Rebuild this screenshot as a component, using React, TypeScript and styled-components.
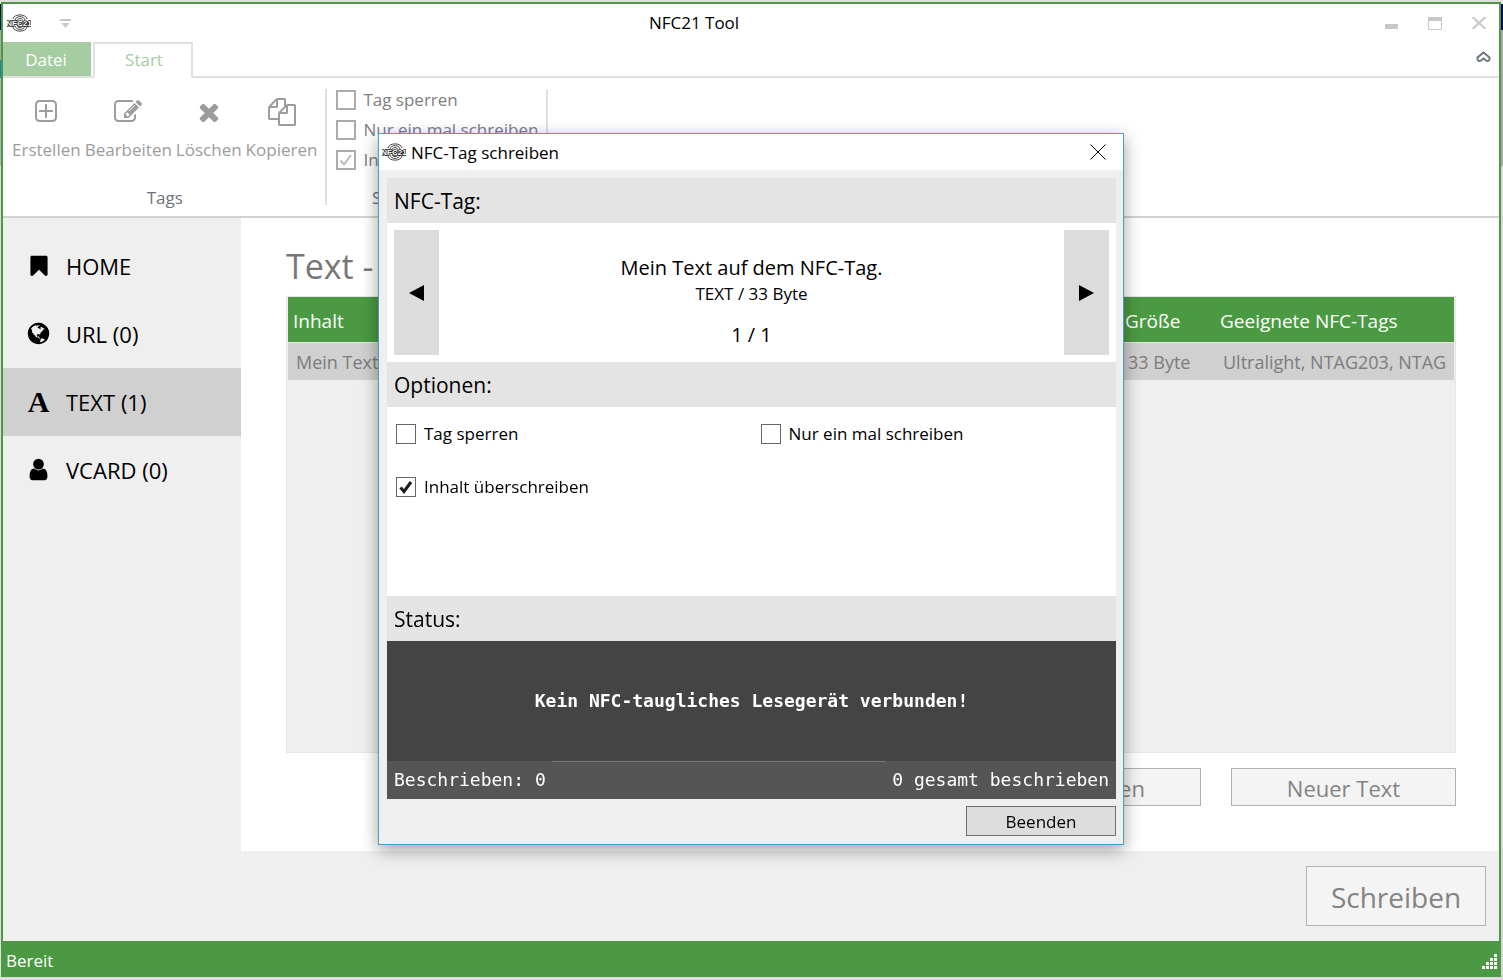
import React from "react";
import styled, { createGlobalStyle, css } from "styled-components";

const GREEN = "#4b9a43";
const UI = `"Open Sans", "Noto Sans", sans-serif`;

const GlobalStyle = createGlobalStyle`
  *, *::before, *::after { box-sizing: border-box; }
  html, body { margin: 0; background: #dcdcdc; }
  body { font-family: ${UI}; font-size: 17px; line-height: 24px; color: #000; }
  button, input, table { font: inherit; }
  button { padding: 0; cursor: default; }
`;

/* ---------- icons ---------- */

const paths = {
  create:
    "M1344 800v64q0 14-9 23t-23 9h-352v352q0 14-9 23t-23 9h-64q-14 0-23-9t-9-23v-352h-352q-14 0-23-9t-9-23v-64q0-14 9-23t23-9h352v-352q0-14 9-23t23-9h64q14 0 23 9t9 23v352h352q14 0 23 9t9 23zm128 448v-832q0-66-47-113t-113-47h-832q-66 0-113 47t-47 113v832q0 66 47 113t113 47h832q66 0 113-47t47-113zm128-832v832q0 119-84.5 203.5t-203.5 84.5h-832q-119 0-203.5-84.5t-84.5-203.5v-832q0-119 84.5-203.5t203.5-84.5h832q119 0 203.5 84.5t84.5 203.5z",
  edit:
    "M888 1184l116-116-152-152-116 116v56h96v96h56zm440-720q-16-16-33 1l-350 350q-17 17-1 33t33-1l350-350q17-17 1-33zm80 594v190q0 119-84.5 203.5t-203.5 84.5h-832q-119 0-203.5-84.5t-84.5-203.5v-832q0-119 84.5-203.5t203.5-84.5h832q63 0 117 25 15 7 18 23 3 17-9 29l-49 49q-14 14-32 8-23-6-45-6h-832q-66 0-113 47t-47 113v832q0 66 47 113t113 47h832q66 0 113-47t47-113v-126q0-13 9-22l64-64q15-15 35-7t20 29zm-96-738l288 288-672 672h-288v-288zm444 132l-92 92-288-288 92-92q28-28 68-28t68 28l152 152q28 28 28 68t-28 68z",
  remove:
    "M1490 1322q0 40-28 68l-136 136q-28 28-68 28t-68-28l-294-294-294 294q-28 28-68 28t-68-28l-136-136q-28-28-28-68t28-68l294-294-294-294q-28-28-28-68t28-68l136-136q28-28 68-28t68 28l294 294 294-294q28-28 68-28t68 28l136 136q28 28 28 68t-28 68l-294 294 294 294q28 28 28 68z",
  copy:
    "M1696 384q40 0 68 28t28 68v1216q0 40-28 68t-68 28h-960q-40 0-68-28t-28-68v-288h-544q-40 0-68-28t-28-68v-672q0-40 20-88t48-76l408-408q28-28 76-48t88-20h416q40 0 68 28t28 68v328q68-40 128-40h416zm-544 213l-299 299h299v-299zm-640-384l-299 299h299v-299zm196 647l316-316v-416h-384v416q0 40-28 68t-68 28h-416v640h512v-256q0-40 20-88t48-76zm956 804v-1152h-384v416q0 40-28 68t-68 28h-416v640h896z",
  bookmark:
    "M1420 128q23 0 44 9 33 13 52.5 41t19.5 62v1289q0 34-19.5 62t-52.5 41q-19 8-44 8-48 0-83-32l-441-424-441 424q-36 33-83 33-23 0-44-9-33-13-52.5-41t-19.5-62v-1289q0-34 19.5-62t52.5-41q21-9 44-9h1048z",
  user:
    "M1536 1399q0 109-62.5 187t-150.5 78h-854q-88 0-150.5-78t-62.5-187q0-85 8.5-160.5t31.5-152 58.5-131 94-89 134.5-34.5q131 128 313 128t313-128q76 0 134.5 34.5t94 89 58.5 131 31.5 152 8.5 160.5zm-256-887q0 159-112.5 271.5t-271.5 112.5-271.5-112.5-112.5-271.5 112.5-271.5 271.5-112.5 271.5 112.5 112.5 271.5z",
  globe:
    "M896 128q209 0 385.5 103t279.5 279.5 103 385.5-103 385.5-279.5 279.5-385.5 103-385.5-103-279.5-279.5-103-385.5 103-385.5 279.5-279.5 385.5-103zm274 521q-2 1-9.5 9.5t-13.5 9.5q2 0 4.5-5t5-11 3.5-7q6-7 22-15 14-6 52-12 34-8 51 11-2-2 9.5-13t14.5-12q3-2 15-4.5t15-7.5l2-22q-12 1-17.5-7t-6.5-21q0 2-6 8 0-7-4.5-8t-11.5 1-9 1q-10-3-15-7.5t-8-16.5-4-15q-2-5-9.5-11t-9.5-10q-1-2-2.5-5.5t-3-6.5-4-5.5-5.5-2.5-7 5-7.5 10-4.5 5q-3-2-6-1.5t-4.5 1-4.5 3-5 3.5q-3 2-8.5 3t-8.5 2q15-5-1-11-10-4-16-3 9-4 7.5-12t-8.5-14h5q-1-4-8.5-8.5t-17.5-8.5-13-6q-8-5-34-9.5t-33-.5q-5 6-4.5 10.5t4 14 3.5 12.5q1 6-5.5 13t-6.5 12q0 7 14 15.5t10 21.5q-3 8-16 16t-16 12q-5 8-1.5 18.5t10.5 16.5q2 2 1.5 4t-3.5 4.5-5.5 4-6.5 3.5l-3 2q-11 5-20.5-6t-13.5-26q-7-25-16-30-23-8-29 1-5-13-41-26-25-9-58-4 6-1 0-15-7-15-19-12 3-6 4-17.5t1-13.5q3-13 12-23 1-1 7-8.5t9.5-13.5.5-6q35 4 50-11 5-5 11.5-17t10.5-17q9-6 14-5.5t14.5 5.5 14.5 5q14 1 15.5-11t-7.5-20q12 1 3-17-4-7-8-9-12-4-27 5-8 4 2 8-1-1-9.5 10.5t-16.5 17.5-16-5q-1-1-5.5-13.5t-9.5-13.5q-8 0-16 15 3-8-11-15t-24-8q19-12-8-27-7-4-20.5-5t-19.5 4q-5 7-5.5 11.5t5 8 10.5 5.5 11.5 4 8.5 3q14 10 8 14-2 1-8.5 3.5t-11.5 4.5-6 4q-3 4 0 14t-2 14q-5-5-9-17.5t-7-16.5q7 9-25 6l-10-1q-4 0-16 2t-20.5 1-13.5-8q-4-8 0-20 1-4 4-2-4-3-11-9.5t-10-8.5q-46 15-94 41 6 1 12-1 5-2 13-6.5t10-5.5q34-14 42-7l5-5q14 16 20 25-7-4-30-1-20 6-22 12 7 12 5 18-4-3-11.5-10t-14.5-11-15-5q-16 0-22 1-146 80-235 222 7 7 12 8 4 1 5 9t2.5 11 11.5-3q9 8 3 19 1-1 44 27 19 17 21 21 3 11-10 18-1-2-9-9t-9-4q-3 5 .5 18.5t10.5 12.5q-7 0-9.5 16t-2.5 35.5-1 23.5l2 1q-3 12 5.5 34.5t21.5 19.5q-13 3 20 43 6 8 8 9 3 2 12 7.5t15 10 10 10.5q4 5 10 22.5t14 23.5q-2 6 9.5 20t10.5 23q-1 0-2.5 1t-2.5 1q3 7 15.5 14t15.5 13q1 3 2 10t3 11 8 2q2-20-24-62-15-25-17-29-3-5-5.5-15.5t-4.5-14.5q2 0 6 1.5t8.5 3.5 7.5 4 2 3q-3 7 2 17.5t12 18.5 17 19 12 13q6 6 14 19.5t0 13.5q9 0 20 10t17 20q5 8 8 26t5 24q2 7 8.5 13.5t12.5 9.5l16 8 13 7q5 2 18.5 10.5t21.5 11.5q10 4 16 4t14.5-2.5 13.5-3.5q15-2 29 15t21 21q36 19 55 11-2 1 .5 7.5t8 15.5 9 14.5 5.5 8.5q5 6 18 15t18 15q6-4 7-9-3 8 7 20t18 10q14-3 14-32-31 15-49-18 0-1-2.5-5.5t-4-8.5-2.5-8.5 0-7.5 5-3q9 0 10-3.5t-2-12.5-4-13q-1-8-11-20t-12-15q-5 9-16 8t-16-9q0 1-1.5 5.5t-1.5 6.5q-13 0-15-1 1-3 2.5-17.5t3.5-22.5q1-4 5.5-12t7.5-14.5 4-12.5-4.5-9.5-17.5-2.5q-19 1-26 20-1 3-3 10.5t-5 11.5-9 7q-7 3-24 2t-24-5q-13-8-22.5-29t-9.5-37q0-10 2.5-26.5t3-25-5.5-24.5q3-2 9-9.5t10-10.5q2-1 4.5-1.5t4.5 0 4-1.5 3-6q-1-1-4-3-3-3-4-3 7 3 28.5-1.5t27.5 1.5q15 11 22-2 0-1-2.5-9.5t-.5-13.5q5 27 29 9 3 3 15.5 5t17.5 5q3 2 7 5.5t5.5 4.5 5-.5 8.5-6.5q10 14 12 24 11 40 19 44 7 3 11 2t4.5-9.5 0-14-1.5-12.5l-1-8v-18l-1-8q-15-3-18.5-12t1.5-18.5 15-18.5q1-1 8-3.5t15.5-6.5 12.5-8q21-19 15-35 7 0 11-9-1 0-5-3t-7.5-5-4.5-2q9-5 2-16 5-3 7.5-11t7.5-10q9 12 21 2 7-8 1-16 5-7 20.5-10.5t18.5-9.5q7 2 8-2t1-12 3-12q4-5 15-9t13-5l17-11q3-4 0-4 18 2 31-11 10-11-6-20 3-6-3-9.5t-15-5.5q3-1 11.5-.5t10.5-1.5q15-10-7-16-17-5-43 12zm-163 877q206-36 351-189-3-3-12.5-4.5t-12.5-3.5q-18-7-24-8 1-7-2.5-13t-8-9-12.5-8-11-7q-2-2-7-6t-7-5.5-7.5-4.5-8.5-2-10 1l-3 1q-3 1-5.5 2.5t-5.5 3-4 3 0 2.5q-21-17-36-22-5-1-11-5.5t-10.5-7-10-1.5-11.5 7q-5 5-6 15t-2 13q-7-5 0-17.5t2-18.5q-3-6-10.5-4.5t-12 4.5-11.5 8.5-9 6.5-8.5 5.5-8.5 7.5q-3 4-6 12t-5 11q-2-4-11.5-6.5t-9.5-5.5q2 10 4 35t5 38q7 31-12 48-27 25-29 40-4 22 12 26 0 7-8 20.5t-7 21.5q0 6 2 16z",
};

type IconName = keyof typeof paths;

const Icon = ({ name, size = 28 }: { name: IconName; size?: number }) => (
  <svg width={size} height={size} viewBox="0 0 1792 1792" fill="currentColor" aria-hidden="true">
    <path d={paths[name]} />
  </svg>
);

const LogoText = styled.text`
  font: bold 8px "Liberation Sans", sans-serif;
  fill: #fff;
  stroke: #222;
  stroke-width: 1.6px;
  paint-order: stroke;
`;

const Logo = () => (
  <svg width="24" height="18" viewBox="0 0 24 18" aria-hidden="true">
    <g fill="none" stroke="#444" strokeWidth="1">
      <path d="M6 5C7 -0.5 19 -0.5 20 5M8 6C9 1.500 17 1.500 18 6M10 6.500C11 4 15 4 16 6.500" />
      <path d="M6 13C7 18.500 19 18.500 20 13M8 12C9 16.500 17 16.500 18 12M10 12C11 14 15 14 16 12" />
    </g>
    <LogoText x="12" y="12" textAnchor="middle">NFC21</LogoText>
  </svg>
);

/* ---------- window frame ---------- */

const Desktop = styled.div`
  min-height: 100vh;
  display: flex;
  padding: 2px 2px 3px 1px;
  background:
    linear-gradient(#e4e4e4 4px, #000a5a 4px 30px, #aaa 30px 60px, #0a86c8 60px 78px, #b4b4b4 78px 166px, #dedede 166px) left / 1px 100% no-repeat,
    linear-gradient(#e4e4e4 4px, #000a5a 4px 30px, #aaa 30px 166px, #d6d6d6 166px) right / 2px 100% no-repeat,
    #dedede;
`;

const Window = styled.div`
  flex: 1;
  min-width: 0;
  display: flex;
  flex-direction: column;
  border: 2px solid ${GREEN};
  border-bottom: 0;
  background: #fff;
`;

const TitleBar = styled.header`
  display: grid;
  grid-template-columns: 1fr auto 1fr;
  align-items: center;
  height: 38px;
`;

const TitleLeft = styled.div`
  display: flex;
  align-items: center;
  gap: 26px;
  padding-left: 4px;
`;

const AppTitle = styled.h1`
  margin: 0;
  padding-right: 114px;
  font-size: 17px;
  font-weight: 400;
`;

const Title = styled(AppTitle)`
  padding: 2px 0 0;
`;

const WindowButtons = styled.div`
  display: flex;
  justify-content: flex-end;
  gap: 28px;
  padding-right: 12px;
`;

const IconButton = styled.button`
  display: grid;
  place-items: center;
  min-width: 16px;
  height: 22px;
  border: 0;
  background: none;
  color: #c8c8c8;
`;

const TabBar = styled.nav`
  display: flex;
  align-items: stretch;
  height: 36px;
  box-shadow: inset 0 -2px #e1e1e1;
`;

const Tab = styled.button<{ $kind: "file" | "active" }>`
  border: 0;
  ${({ $kind }) =>
    $kind === "file"
      ? css`
          width: 88px;
          margin: 0 2px 2px 0;
          padding: 2px 2px 0 0;
          background: #a6cda1;
          color: #fff;
        `
      : css`
          width: 100px;
          padding: 0 0 2px 2px;
          border: 2px solid #e1e1e1;
          border-bottom: 1px solid #fff;
          background: #fff;
          color: #a6cda1;
        `}
`;

const Collapse = styled(IconButton)`
  margin: 4px 8px 0 auto;
  color: #6f7580;
`;

/* ---------- ribbon ---------- */

const Ribbon = styled.section`
  display: flex;
  height: 140px;
  padding: 11px 0;
  border-bottom: 2px solid #d2d2d2;
`;

const Group = styled.div`
  display: flex;
  flex-direction: column;
  justify-content: space-between;
  padding: 0 8px 0 9px;
  border-right: 2px solid #e1e1e1;
`;

const GroupLabel = styled.div`
  height: 15px;
  display: flex;
  align-items: center;
  justify-content: center;
  color: #6d7380;
`;

const Tools = styled.div`
  display: flex;
  gap: 4px;
`;

const Tool = styled.button`
  display: flex;
  flex-direction: column;
  align-items: center;
  gap: 12px;
  padding-top: 9px;
  border: 0;
  background: none;
  color: #9c9c9c;
`;

/* ---------- check boxes ---------- */

const CheckLabel = styled.label<{ $muted?: boolean }>`
  display: flex;
  align-items: center;
  gap: ${({ $muted }) => ($muted ? 7 : 8)}px;
  color: ${({ $muted }) => ($muted ? "#808080" : "#000")};
`;

const CheckWell = styled.span`
  display: grid;
  height: 24px;
  align-items: center;

  > * { grid-area: 1 / 1; }
  svg { pointer-events: none; }
`;

const CheckInput = styled.input<{ $muted?: boolean }>`
  appearance: none;
  width: 20px;
  height: 20px;
  margin: 0;
  border: ${({ $muted }) => ($muted ? "2px solid #ababab" : "1px solid #666")};
  background: #fff;
`;

const Check = ({ label, checked, muted }: { label: string; checked?: boolean; muted?: boolean }) => (
  <CheckLabel $muted={muted}>
    <CheckWell>
      <CheckInput type="checkbox" defaultChecked={checked} disabled={muted} $muted={muted} />
      {checked && (
        <svg width="20" height="20" viewBox="0 0 20 20" fill="none" stroke={muted ? "#b8b8b8" : "#1c1c1c"} strokeWidth={muted ? 2 : 3} aria-hidden="true">
          <path d="M4.500 10.500L8 14.500L15 5" />
        </svg>
      )}
    </CheckWell>
    {label}
  </CheckLabel>
);

const RibbonChecks = styled.div`
  display: flex;
  flex-direction: column;
  gap: 8px;

  ${CheckWell} { height: 20px; }
  ${CheckLabel} { height: 22px; }
`;

/* ---------- body ---------- */

const Body = styled.div`
  flex: 1;
  display: grid;
  grid-template-columns: 238px minmax(0, 1fr);
  grid-template-rows: minmax(0, 1fr) 90px;
  background: #efefef;
`;

const Sidebar = styled.nav`
  grid-row: 1 / 3;
  padding-top: 14px;
`;

const SideLink = styled.a<{ $active?: boolean }>`
  display: flex;
  align-items: center;
  height: 68px;
  padding-left: 23px;
  gap: 15px;
  background: ${({ $active }) => ($active ? "#d0d0d0" : "transparent")};
  color: #000;
  font-size: 22px;
  text-decoration: none;
`;

const SideIcon = styled.span`
  display: grid;
  place-items: center;
  width: 25px;
  height: 30px;
  margin-bottom: 1px;
  font: bold 30px/30px "Liberation Serif", serif;
`;

const Main = styled.main`
  display: flex;
  flex-direction: column;
  padding: 24px 43px 45px 45px;
  background: #fff;
`;

const Heading = styled.h2`
  margin: 0;
  height: 54px;
  font-size: 34px;
  font-weight: 400;
  line-height: 48px;
  color: #777;
`;

const TableWell = styled.div`
  flex: 1;
  padding: 0 1px;
  border: 1px solid #e6e6e6;
  background: #efefef;
`;

const DataTable = styled.table`
  width: 100%;
  table-layout: fixed;
  border-collapse: collapse;
  text-align: left;

  th {
    height: 45px;
    padding: 3px 0 0 5px;
    background: ${GREEN};
    color: #fff;
    font-weight: 400;
    font-size: 19px;
  }
  td {
    height: 38px;
    padding: 1px 8px 0;
    border-top: 1px solid #e6e6e6;
    background: #d0d0d0;
    color: #7c7c7c;
    font-size: 18px;
    white-space: nowrap;
  }
`;

const Clip = styled.div`
  overflow: hidden;
`;

const SizeCol = styled.col`
  width: 95px;
`;

const TagsCol = styled.col`
  width: 239px;
`;

const Actions = styled.div`
  display: flex;
  justify-content: flex-end;
  gap: 30px;
  margin-top: 15px;
`;

const MutedButton = styled.button<{ $large?: boolean }>`
  width: ${({ $large }) => ($large ? 180 : 225)}px;
  height: ${({ $large }) => ($large ? 60 : 38)}px;
  padding-top: 2px;
  border: 1px solid #adb2b5;
  background: #f4f4f4;
  color: #838383;
  font-size: ${({ $large }) => ($large ? 28 : 22)}px;
`;

const Footer = styled.div`
  display: flex;
  justify-content: flex-end;
  align-items: center;
  padding-right: 13px;
`;

const StatusBar = styled.footer`
  display: flex;
  align-items: center;
  justify-content: space-between;
  height: 36px;
  padding: 4px 0 0 3px;
  background: ${GREEN};
  color: #fff;
`;

/* ---------- dialog ---------- */

const Overlay = styled.div`
  position: fixed;
  inset: 0;
  display: grid;
  place-items: center;
  padding: 0 1px 2px 0;
`;

const Dialog = styled.section`
  display: flex;
  flex-direction: column;
  width: 746px;
  border: 1px solid #4a9fc9;
  background: #efefef;
  box-shadow: 0 5px 16px rgba(0, 0, 0, 0.38);
`;

const DialogTitle = styled.header`
  display: flex;
  align-items: center;
  height: 36px;
  padding: 0 17px 0 3px;
  gap: 5px;
  background: #fff;
`;

const CloseButton = styled(IconButton)`
  margin-left: auto;
  color: #000;
`;

const DialogBody = styled.div`
  display: flex;
  flex-direction: column;
  padding: 8px 7px 8px 8px;
`;

const SectionTitle = styled.h3`
  margin: 0;
  height: 45px;
  padding: 0 7px;
  background: #e4e4e4;
  font-size: 21px;
  font-weight: 400;
  line-height: 47px;
`;

const Pager = styled.div`
  display: grid;
  grid-template-columns: 45px 1fr 45px;
  height: 139px;
  padding: 7px;
  background: #fff;
`;

const PagerButton = styled.button`
  display: grid;
  place-items: center;
  border: 0;
  background: #dcdcdc;
`;

const PagerText = styled.div`
  display: flex;
  flex-direction: column;
  align-items: center;
  padding-top: 24px;
`;

const PagerMain = styled.div`
  font-size: 20px;
  line-height: 28px;
`;

const PagerCount = styled(PagerMain)`
  margin-top: 15px;
`;

const Options = styled.div`
  display: grid;
  grid-template-columns: 1fr 1fr;
  align-content: start;
  row-gap: 29px;
  height: 189px;
  padding-top: 15px;
  background: #fff;

  ${CheckLabel} { padding-left: 9px; }
`;

const Console = styled.div`
  background: #444;
  color: #fff;
  font: 18px/24px "DejaVu Sans Mono", monospace;
`;

const ConsoleMessage = styled.p`
  display: grid;
  place-items: center;
  height: 120px;
  margin: 0;
  font-weight: 700;
`;

const ConsoleCounts = styled.div`
  display: flex;
  justify-content: space-between;
  align-items: center;
  height: 38px;
  padding: 0 7px;
  background: #555;
  white-space: nowrap;
`;

const ProgressLine = styled.span`
  align-self: start;
  width: 334px;
  height: 1px;
  background: #777;
`;

const DialogActions = styled.div`
  display: flex;
  justify-content: flex-end;
  padding-top: 7px;
`;

const DialogButton = styled.button`
  width: 150px;
  height: 30px;
  padding-top: 2px;
  border: 1px solid #6f6f6f;
  background: #ddd;
`;

const tools: { name: IconName; label: string }[] = [
  { name: "create", label: "Erstellen" },
  { name: "edit", label: "Bearbeiten" },
  { name: "remove", label: "Löschen" },
  { name: "copy", label: "Kopieren" },
];

const gripDots = [
  [12, 0], [8, 4], [12, 4], [4, 8], [8, 8], [12, 8], [0, 12], [4, 12], [8, 12], [12, 12],
];

export default function App() {
  return (
    <>
      <GlobalStyle />
      <Desktop>
        <Window>
          <TitleBar>
            <TitleLeft>
              <Logo />
              <IconButton aria-label="Schnellzugriff anpassen">
                <svg width="11" height="9" viewBox="0 0 11 9" fill="currentColor">
                  <path d="M0 0H11V2H0ZM1.500 4H9.500L5.500 9Z" />
                </svg>
              </IconButton>
            </TitleLeft>
            <AppTitle>NFC21 Tool</AppTitle>
            <WindowButtons>
              <IconButton aria-label="Minimieren">
                <svg width="14" height="14" viewBox="0 0 14 14" fill="currentColor">
                  <path d="M1 8H14V13H1Z" />
                </svg>
              </IconButton>
              <IconButton aria-label="Maximieren">
                <svg width="14" height="13" viewBox="0 0 14 13" fill="none" stroke="currentColor">
                  <path d="M0.500 0.500H13.500V12.500H0.500Z" />
                  <path d="M0 2H14" strokeWidth="4" />
                </svg>
              </IconButton>
              <IconButton aria-label="Schließen">
                <svg width="14" height="12" viewBox="0 0 14 12" fill="none" stroke="currentColor" strokeWidth="2">
                  <path d="M0.500 0L13.500 12M13.500 0L0.500 12" />
                </svg>
              </IconButton>
            </WindowButtons>
          </TitleBar>

          <TabBar>
            <Tab $kind="file">Datei</Tab>
            <Tab $kind="active">Start</Tab>
            <Collapse aria-label="Menüband minimieren">
              <svg width="15" height="12" viewBox="0 0 15 12" fill="none" stroke="currentColor" strokeWidth="2">
                <path d="M7.500 1.500L1.500 6.500V8.500Q2.500 11 5 9.500L7.500 7.500L10 9.500Q12.500 11 13.500 8.500V6.500Z" />
              </svg>
            </Collapse>
          </TabBar>

          <Ribbon>
            <Group>
              <Tools>
                {tools.map((t) => (
                  <Tool key={t.name}>
                    <Icon name={t.name} />
                    {t.label}
                  </Tool>
                ))}
              </Tools>
              <GroupLabel>Tags</GroupLabel>
            </Group>
            <Group>
              <RibbonChecks>
                <Check label="Tag sperren" muted />
                <Check label="Nur ein mal schreiben" muted />
                <Check label="Inhalt überschreiben" checked muted />
              </RibbonChecks>
              <GroupLabel>Schreiboptionen</GroupLabel>
            </Group>
          </Ribbon>

          <Body>
            <Sidebar>
              <SideLink href="#home">
                <SideIcon><Icon name="bookmark" size={24} /></SideIcon>HOME
              </SideLink>
              <SideLink href="#url">
                <SideIcon><Icon name="globe" size={25} /></SideIcon>URL (0)
              </SideLink>
              <SideLink href="#text" $active>
                <SideIcon aria-hidden="true">A</SideIcon>TEXT (1)
              </SideLink>
              <SideLink href="#vcard">
                <SideIcon><Icon name="user" size={25} /></SideIcon>VCARD (0)
              </SideLink>
            </Sidebar>
            <Main>
              <Heading>Text - Übersicht</Heading>
              <TableWell>
                <DataTable>
                  <colgroup>
                    <col />
                    <SizeCol />
                    <TagsCol />
                  </colgroup>
                  <thead>
                    <tr>
                      <th>Inhalt</th>
                      <th>Größe</th>
                      <th>Geeignete NFC-Tags</th>
                    </tr>
                  </thead>
                  <tbody>
                    <tr>
                      <td>Mein Text auf dem NFC-Tag.</td>
                      <td>33 Byte</td>
                      <td><Clip>Ultralight, NTAG203, NTAG213</Clip></td>
                    </tr>
                  </tbody>
                </DataTable>
              </TableWell>
              <Actions>
                <MutedButton>Bearbeiten</MutedButton>
                <MutedButton>Neuer Text</MutedButton>
              </Actions>
            </Main>
            <Footer>
              <MutedButton $large>Schreiben</MutedButton>
            </Footer>
          </Body>

          <StatusBar>
            Bereit
            <svg width="18" height="15" viewBox="0 0 18 15" fill="#fff" aria-hidden="true">
              {gripDots.map(([x, y]) => (
                <rect key={`${x}-${y}`} x={x + 1} y={y} width="3" height="3" />
              ))}
            </svg>
          </StatusBar>
        </Window>
      </Desktop>

      <Overlay>
        <Dialog role="dialog" aria-labelledby="dialog-title">
          <DialogTitle>
            <Logo />
            <Title as="h2" id="dialog-title">NFC-Tag schreiben</Title>
            <CloseButton aria-label="Dialog schließen">
              <svg width="16" height="16" viewBox="0 0 16 16" fill="none" stroke="currentColor">
                <path d="M0.500 0.500L15.500 15.500M15.500 0.500L0.500 15.500" />
              </svg>
            </CloseButton>
          </DialogTitle>
          <DialogBody>
            <SectionTitle>NFC-Tag:</SectionTitle>
            <Pager>
              <PagerButton aria-label="Zurück">
                <svg width="15" height="16" viewBox="0 0 15 16"><path d="M15 0V16L0 8Z" /></svg>
              </PagerButton>
              <PagerText>
                <PagerMain>Mein Text auf dem NFC-Tag.</PagerMain>
                <div>TEXT / 33 Byte</div>
                <PagerCount>1 / 1</PagerCount>
              </PagerText>
              <PagerButton aria-label="Weiter">
                <svg width="15" height="16" viewBox="0 0 15 16"><path d="M0 0V16L15 8Z" /></svg>
              </PagerButton>
            </Pager>
            <SectionTitle>Optionen:</SectionTitle>
            <Options>
              <Check label="Tag sperren" />
              <Check label="Nur ein mal schreiben" />
              <Check label="Inhalt überschreiben" checked />
            </Options>
            <SectionTitle>Status:</SectionTitle>
            <Console>
              <ConsoleMessage>Kein NFC-taugliches Lesegerät verbunden!</ConsoleMessage>
              <ConsoleCounts>
                <span>Beschrieben: 0</span>
                <ProgressLine />
                <span>0 gesamt beschrieben</span>
              </ConsoleCounts>
            </Console>
            <DialogActions>
              <DialogButton>Beenden</DialogButton>
            </DialogActions>
          </DialogBody>
        </Dialog>
      </Overlay>
    </>
  );
}
